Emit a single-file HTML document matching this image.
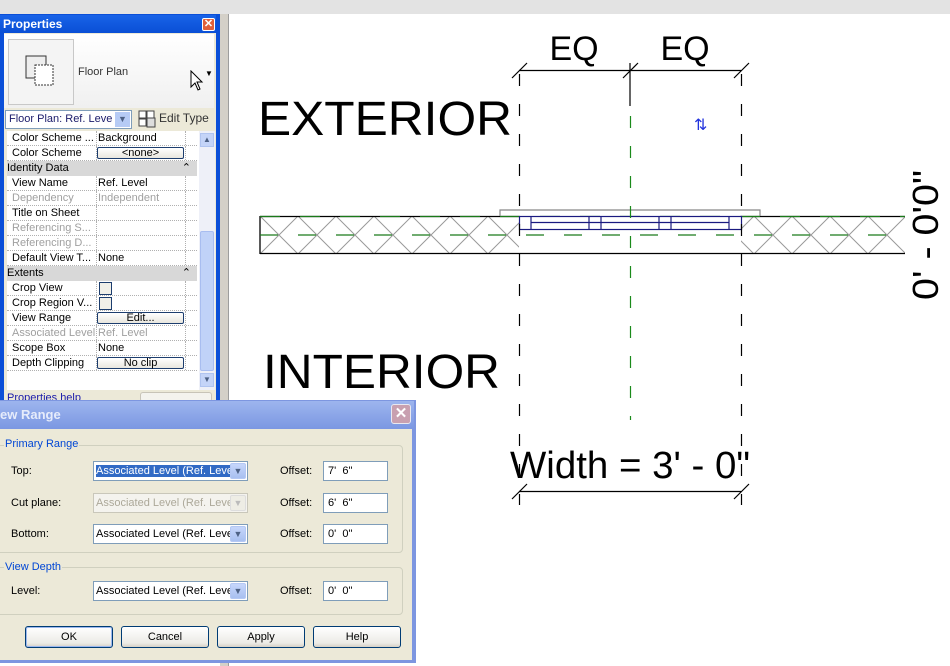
<!DOCTYPE html>
<html><head><meta charset="utf-8"><style>
*{margin:0;padding:0;box-sizing:border-box}
body{width:950px;height:666px;overflow:hidden;background:#fff;font-family:"Liberation Sans",sans-serif;font-size:11px;position:relative}
.a{position:absolute}
.row{position:absolute;left:7px;width:190px;height:15px;border-bottom:1px dotted #b0b0b0;line-height:14px}
.row .k{position:absolute;left:5px;width:85px;white-space:nowrap;overflow:hidden}
.row .v{position:absolute;left:89px;width:90px;white-space:nowrap;overflow:hidden;border-left:1px dotted #b0b0b0;padding-left:1px;height:14px}
.row .e{position:absolute;left:178px;width:12px;height:14px;border-left:1px dotted #b0b0b0}
.g{color:#a0a0a0}
.hdr{position:absolute;left:7px;width:190px;height:15px;background:#d8d8d8;line-height:14px;padding-left:0}
.btn{position:absolute;left:90px;top:1px;width:87px;height:12px;border:1px solid #1c3d6e;border-radius:2px;background:linear-gradient(#fff,#e8e6de);text-align:center;line-height:10px;font-size:11px}
.cb{position:absolute;left:92px;top:1px;width:13px;height:13px;border:1px solid #1c3d6e;background:#f0efe8}
.dl{position:absolute;font-size:11px}
.combo{position:absolute;left:93px;width:155px;height:20px;border:1px solid #7f9db9;background:#fff;line-height:18px;padding-left:2px;white-space:nowrap;overflow:hidden}
.combo .ar{position:absolute;right:1px;top:1px;width:16px;height:16px;background:linear-gradient(#c6d6fb,#a8c0f0);border:1px solid #b4c8f4;border-radius:2px;color:#4d6185;font-size:9px;text-align:center;line-height:15px}
.off{position:absolute;left:323px;width:65px;height:20px;border:1px solid #7f9db9;background:#fff;line-height:18px;padding-left:4px}
.db{position:absolute;top:626px;width:88px;height:22px;border:1px solid #003c74;border-radius:3px;background:linear-gradient(#fff,#ecebe6 80%,#d6d0c5);text-align:center;line-height:20px}
</style></head><body>
<div class="a" style="left:0;top:0;width:950px;height:14px;background:#e3e3e3"></div>
<div class="a" style="left:220px;top:14px;width:8px;height:652px;background:#d4d0c8"></div>
<div class="a" style="left:228px;top:14px;width:1px;height:652px;background:#9d9d9d"></div>
<div class="a" style="left:0;top:14px;width:220px;height:652px;background:#0b4fd8"></div>
<div class="a" style="left:0;top:15px;width:216px;height:18px;background:linear-gradient(#1863e8,#0a4fd6);color:#fff;font-weight:bold;font-size:12px;line-height:18px;padding-left:3px">Properties</div>
<div class="a" style="left:202px;top:18px;width:13px;height:13px;background:#e2603a;border:1px solid #fff;border-radius:2px;color:#fff;font-size:11px;font-weight:bold;text-align:center;line-height:11px">✕</div>
<div class="a" style="left:4px;top:33px;width:212px;height:633px;background:#ece9d8"></div>
<div class="a" style="left:4px;top:34px;width:210px;height:74px;background:linear-gradient(#fff,#f0f0f0)"></div>
<div class="a" style="left:8px;top:39px;width:66px;height:66px;border:1px solid #c8c8c8;background:#f4f4f4"></div>
<svg class="a" style="left:25px;top:55px" width="32" height="32"><rect x="1" y="1" width="20" height="22" fill="#eee" stroke="#333"/><rect x="10" y="10" width="18" height="20" fill="#fff" stroke="#333" stroke-dasharray="2 1"/></svg>
<div class="a" style="left:78px;top:66px;color:#333">Floor Plan</div>
<div class="a" style="left:205px;top:69px;font-size:8px">▼</div>
<svg class="a" style="left:190px;top:70px" width="14" height="22"><path d="M1 1 L1 17 L5 13 L8 20 L10 19 L7 12 L12 12 Z" fill="#fff" stroke="#000"/></svg>
<div class="a" style="left:5px;top:110px;width:127px;height:19px;border:1px solid #7f9db9;background:#fff;line-height:17px;padding-left:3px;color:#1a1a6a;white-space:nowrap;overflow:hidden">Floor Plan: Ref. Leve<div class="a" style="right:1px;top:1px;width:15px;height:15px;background:#b6cbf5;color:#4d6185;font-size:9px;text-align:center;line-height:15px">▼</div></div>
<svg class="a" style="left:138px;top:110px" width="18" height="18"><rect x="1" y="1" width="7" height="7" fill="#fff" stroke="#444"/><rect x="1" y="9" width="7" height="7" fill="#fff" stroke="#444"/><rect x="9" y="1" width="7" height="7" fill="#fff" stroke="#444"/><rect x="9" y="8" width="8" height="9" fill="#ddd" stroke="#444"/></svg>
<div class="a" style="left:159px;top:111px;color:#333;font-size:12px">Edit Type</div>
<div class="a" style="left:7px;top:131px;width:192px;height:259px;background:#fff"></div>
<div class="row" style="top:131px"><span class="k">Color Scheme ...</span><span class="v">Background</span><span class="e"></span></div>
<div class="row" style="top:146px"><span class="k">Color Scheme</span><span class="v"></span><span class="btn">&lt;none&gt;</span><span class="e"></span></div>
<div class="hdr" style="top:161px">Identity Data<span style="position:absolute;right:6px">⌃</span></div>
<div class="row" style="top:176px"><span class="k">View Name</span><span class="v">Ref. Level</span><span class="e"></span></div>
<div class="row g" style="top:191px"><span class="k">Dependency</span><span class="v">Independent</span><span class="e"></span></div>
<div class="row" style="top:206px"><span class="k">Title on Sheet</span><span class="v"></span><span class="e"></span></div>
<div class="row g" style="top:221px"><span class="k">Referencing S...</span><span class="v"></span><span class="e"></span></div>
<div class="row g" style="top:236px"><span class="k">Referencing D...</span><span class="v"></span><span class="e"></span></div>
<div class="row" style="top:251px"><span class="k">Default View T...</span><span class="v">None</span><span class="e"></span></div>
<div class="hdr" style="top:266px">Extents<span style="position:absolute;right:6px">⌃</span></div>
<div class="row" style="top:281px"><span class="k">Crop View</span><span class="v"></span><span class="cb"></span><span class="e"></span></div>
<div class="row" style="top:296px"><span class="k">Crop Region V...</span><span class="v"></span><span class="cb"></span><span class="e"></span></div>
<div class="row" style="top:311px"><span class="k">View Range</span><span class="v"></span><span class="btn">Edit...</span><span class="e"></span></div>
<div class="row g" style="top:326px"><span class="k">Associated Level</span><span class="v">Ref. Level</span><span class="e"></span></div>
<div class="row" style="top:341px"><span class="k">Scope Box</span><span class="v">None</span><span class="e"></span></div>
<div class="row" style="top:356px"><span class="k">Depth Clipping</span><span class="v"></span><span class="btn">No clip</span><span class="e"></span></div>
<div class="a" style="left:199px;top:131px;width:16px;height:259px;background:#eef0f8"></div>
<div class="a" style="left:200px;top:133px;width:14px;height:14px;background:#c4d4f8;border:1px solid #b0c4f0;color:#4d6185;font-size:8px;text-align:center;line-height:12px">▲</div>
<div class="a" style="left:200px;top:231px;width:14px;height:140px;background:#c0d2f8;border:1px solid #a8bdf0;border-radius:2px"></div>
<div class="a" style="left:200px;top:373px;width:14px;height:14px;background:#c4d4f8;border:1px solid #b0c4f0;color:#4d6185;font-size:8px;text-align:center;line-height:12px">▼</div>
<div class="a" style="left:140px;top:392px;width:72px;height:10px;border:1px solid #c8c4b8;border-radius:3px;background:#f4f3ee"></div>
<div class="a" style="left:7px;top:392px;color:#1a1aaa;font-size:11px;height:8px;overflow:hidden">Properties help</div>
<svg class="a" style="left:229px;top:14px" width="721" height="652" viewBox="229 14 721 652">
<defs><pattern id="x" width="38" height="38" patternUnits="userSpaceOnUse" x="260" y="216"><path d="M0 0L38 38M38 0L0 38" stroke="#999" stroke-width="1"/></pattern></defs>
<rect x="260" y="216" width="259" height="37" fill="url(#x)"/>
<rect x="741" y="216" width="164" height="37" fill="url(#x)"/>
<g stroke="#000" stroke-width="1.3"><line x1="260" y1="216.5" x2="519" y2="216.5"/><line x1="260" y1="253.5" x2="905" y2="253.5"/><line x1="260" y1="216" x2="260" y2="254"/><line x1="741" y1="216.5" x2="905" y2="216.5"/></g>
<line x1="260" y1="235" x2="905" y2="235" stroke="#1a7a1a" stroke-width="1.3" stroke-dasharray="18 20"/>
<line x1="260" y1="216.5" x2="905" y2="216.5" stroke="#1a7a1a" stroke-width="1.3" stroke-dasharray="20 20"/>
<polyline points="500,216 500,210 760,210 760,216" fill="none" stroke="#888" stroke-width="1.2"/>
<rect x="519.5" y="216.5" width="222" height="13" fill="#fff" stroke="#1a1a80" stroke-width="1.2"/>
<g stroke="#1a1a80" stroke-width="1.2" fill="none"><line x1="531" y1="216" x2="531" y2="229"/><line x1="531" y1="222.5" x2="729" y2="222.5"/><line x1="729" y1="216" x2="729" y2="229"/><line x1="589" y1="216" x2="589" y2="229"/><line x1="601" y1="216" x2="601" y2="229"/><line x1="659" y1="216" x2="659" y2="229"/><line x1="671" y1="216" x2="671" y2="229"/></g>
<g stroke="#000" stroke-width="1.2"><line x1="519" y1="70.5" x2="741" y2="70.5"/><line x1="512" y1="78" x2="527" y2="63"/><line x1="623" y1="78" x2="638" y2="63"/><line x1="734" y1="78" x2="749" y2="63"/><line x1="630" y1="63" x2="630" y2="106"/>
<line x1="519" y1="491.5" x2="741" y2="491.5"/><line x1="512" y1="499" x2="527" y2="484"/><line x1="734" y1="499" x2="749" y2="484"/></g>
<g stroke-width="1.2" stroke-dasharray="12 18"><line x1="519.5" y1="74" x2="519.5" y2="505" stroke="#000"/><line x1="741.5" y1="74" x2="741.5" y2="505" stroke="#000"/><line x1="630.5" y1="116" x2="630.5" y2="420" stroke="#1a8a1a"/></g>
<text x="574" y="60" font-family="Liberation Sans" font-size="34" text-anchor="middle">EQ</text>
<text x="685" y="60" font-family="Liberation Sans" font-size="34" text-anchor="middle">EQ</text>
<text x="258" y="135" font-family="Liberation Sans" font-size="48" textLength="254" lengthAdjust="spacingAndGlyphs">EXTERIOR</text>
<text x="263" y="388" font-family="Liberation Sans" font-size="48" textLength="237" lengthAdjust="spacingAndGlyphs">INTERIOR</text>
<text x="510" y="478" font-family="Liberation Sans" font-size="38" textLength="240" lengthAdjust="spacingAndGlyphs">Width = 3' - 0"</text>
<text transform="translate(938,300) rotate(-90)" font-family="Liberation Sans" font-size="36" textLength="130" lengthAdjust="spacingAndGlyphs">0' - 0'0"</text>
<text x="694" y="130" font-family="Liberation Sans" font-size="16" fill="#2233dd">⇅</text>
</svg>
<div class="a" style="left:0;top:400px;width:416px;height:263px;background:#7d96e0"></div>
<div class="a" style="left:0;top:401px;width:414px;height:28px;background:linear-gradient(#9db5ee,#7b97e2);color:#e6ecfb;font-weight:bold;font-size:13px;line-height:28px;padding-left:0">ew Range</div>
<div class="a" style="left:391px;top:404px;width:20px;height:20px;background:#c8a0b0;border:1px solid #e8e8f0;border-radius:3px;color:#fff;font-size:15px;font-weight:bold;text-align:center;line-height:18px">✕</div>
<div class="a" style="left:0;top:429px;width:412px;height:231px;background:#ece9d8"></div>
<div class="a" style="left:-4px;top:445px;width:407px;height:108px;border:1px solid #d0d0bf;border-radius:4px"></div>
<div class="a" style="left:4px;top:438px;background:#ece9d8;color:#0046d5;padding:0 1px">Primary Range</div>
<div class="a" style="left:-4px;top:567px;width:407px;height:48px;border:1px solid #d0d0bf;border-radius:4px"></div>
<div class="a" style="left:4px;top:561px;background:#ece9d8;color:#0046d5;padding:0 1px">View Depth</div>
<div class="dl" style="left:11px;top:465px">Top:</div>
<div class="dl" style="left:11px;top:497px">Cut plane:</div>
<div class="dl" style="left:11px;top:528px">Bottom:</div>
<div class="dl" style="left:11px;top:585px">Level:</div>
<div class="combo" style="top:461px"><span style="background:#316ac5;color:#fff">Associated Level (Ref. Leve</span><span class="ar">▼</span></div>
<div class="combo" style="top:493px;background:#f4f3ee;border-color:#c9c7ba;color:#aca899">Associated Level (Ref. Leve<span class="ar" style="background:#eeede5;border-color:#ddd;color:#bbb">▼</span></div>
<div class="combo" style="top:524px">Associated Level (Ref. Leve<span class="ar">▼</span></div>
<div class="combo" style="top:581px">Associated Level (Ref. Leve<span class="ar">▼</span></div>
<div class="dl" style="left:280px;top:465px">Offset:</div>
<div class="dl" style="left:280px;top:497px">Offset:</div>
<div class="dl" style="left:280px;top:528px">Offset:</div>
<div class="dl" style="left:280px;top:585px">Offset:</div>
<div class="off" style="top:461px">7'&nbsp; 6"</div>
<div class="off" style="top:493px">6'&nbsp; 6"</div>
<div class="off" style="top:524px">0'&nbsp; 0"</div>
<div class="off" style="top:581px">0'&nbsp; 0"</div>
<div class="db" style="left:25px;box-shadow:inset 0 0 0 1px #9cb8ee">OK</div>
<div class="db" style="left:121px">Cancel</div>
<div class="db" style="left:217px">Apply</div>
<div class="db" style="left:313px">Help</div>
<div class="a" style="left:0;top:663px;width:220px;height:3px;background:#fff"></div>
</body></html>
